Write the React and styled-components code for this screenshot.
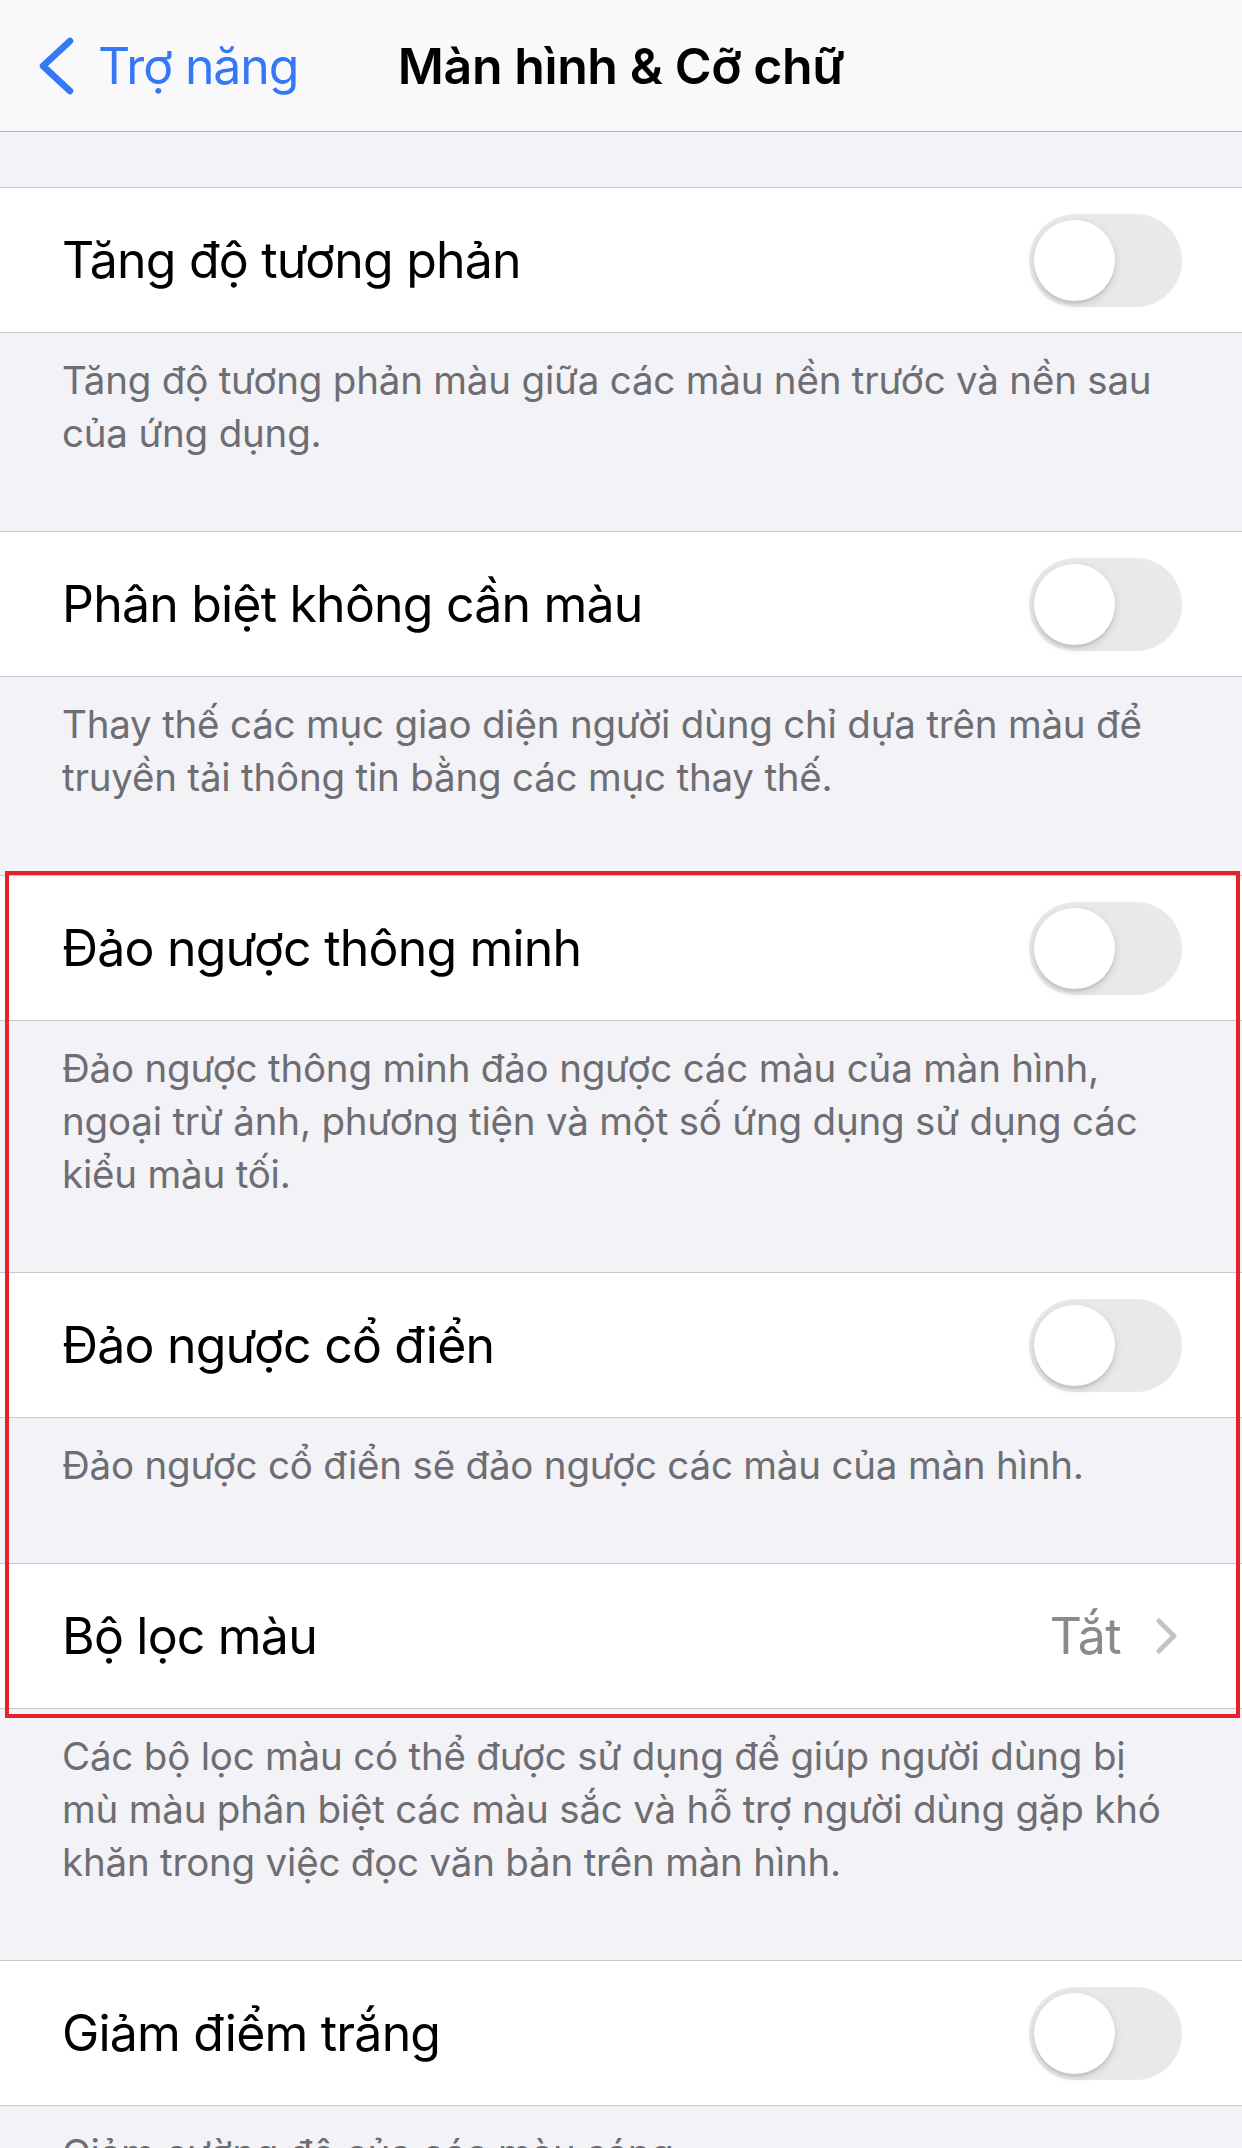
import React from "react";
import styled, { createGlobalStyle } from "styled-components";

const GlobalStyle = createGlobalStyle`
  html, body {
    margin: 0;
    padding: 0;
    background: #f2f2f7;
  }
  body {
    font-family: "Inter", "Noto Sans", "Liberation Sans", sans-serif;
    -webkit-font-smoothing: antialiased;
  }
`;

const Page = styled.div`
  width: 1242px;
  height: 2148px;
  overflow: hidden;
  background: #f2f2f7;
`;

const NavBar = styled.div`
  height: 131px;
  background: #f9f9fb;
  border-bottom: 1px solid #b4b4b8;
  position: relative;
  display: flex;
  align-items: center;
`;

const BackButton = styled.div`
  display: flex;
  align-items: center;
  gap: 23px;
  padding-left: 37px;
  color: #3478f6;
  font-size: 50px;
  letter-spacing: -1.1px;
`;

const NavTitle = styled.div`
  position: absolute;
  left: 0;
  right: 0;
  text-align: center;
  font-size: 50px;
  font-weight: 600;
  color: #000;
  letter-spacing: -0.4px;
  pointer-events: none;
`;

const TopGap = styled.div`
  height: 55px;
`;

const Row = styled.div`
  box-sizing: border-box;
  height: 146px;
  background: #fff;
  border-top: 1px solid #c8c7cc;
  border-bottom: 1px solid #c8c7cc;
  display: flex;
  align-items: center;
  justify-content: space-between;
  padding: 0 60px 0 62px;
`;

const RowLabel = styled.span`
  font-size: 50px;
  color: #000;
  letter-spacing: -0.8px;
`;

const Track = styled.div`
  width: 153px;
  height: 93px;
  border-radius: 47px;
  background: #e9e9eb;
  position: relative;
  flex-shrink: 0;
`;

const Knob = styled.div`
  position: absolute;
  top: 6px;
  left: 5px;
  width: 81px;
  height: 81px;
  border-radius: 50%;
  background: #fff;
  box-shadow: 0 3px 8px rgba(0, 0, 0, 0.15), 0 3px 1px rgba(0, 0, 0, 0.06);
`;

const Detail = styled.div`
  display: flex;
  align-items: center;
  gap: 34px;
  padding-right: 3px;
`;

const DetailValue = styled.span`
  font-size: 50px;
  color: #8a8a8e;
  letter-spacing: -0.6px;
`;

const Footer = styled.div`
  padding: 21px 40px 71px 62px;
  font-size: 38.5px;
  line-height: 53px;
  color: #6d6d72;
  letter-spacing: -0.2px;
  white-space: nowrap;
`;

const Highlight = styled.div`
  position: relative;
  &::after {
    content: "";
    position: absolute;
    top: -4px;
    bottom: -9px;
    left: 5px;
    right: 2px;
    border: 4.5px solid #e8202a;
    pointer-events: none;
  }
`;

function Toggle() {
  return (
    <Track>
      <Knob />
    </Track>
  );
}

function BackChevron() {
  return (
    <svg width="38" height="60" viewBox="0 0 38 60">
      <path
        d="M33 5 L6 30 L33 55"
        fill="none"
        stroke="#3478f6"
        strokeWidth="6.5"
        strokeLinecap="round"
        strokeLinejoin="round"
      />
    </svg>
  );
}

function RightChevron() {
  return (
    <svg width="24" height="38" viewBox="0 0 24 38">
      <path
        d="M4 4 L19 19 L4 34"
        fill="none"
        stroke="#c4c4c7"
        strokeWidth="5"
        strokeLinecap="round"
        strokeLinejoin="round"
      />
    </svg>
  );
}

function Lines({ lines }) {
  return lines.map((l, i) => (
    <React.Fragment key={i}>
      {l}
      {i < lines.length - 1 && <br />}
    </React.Fragment>
  ));
}

export default function App() {
  return (
    <>
      <GlobalStyle />
      <Page>
        <NavBar>
          <BackButton>
            <BackChevron />
            <span>Trợ năng</span>
          </BackButton>
          <NavTitle>Màn hình &amp; Cỡ chữ</NavTitle>
        </NavBar>
        <TopGap />

        <Row>
          <RowLabel>Tăng độ tương phản</RowLabel>
          <Toggle />
        </Row>
        <Footer>
          <Lines
            lines={[
              "Tăng độ tương phản màu giữa các màu nền trước và nền sau",
              "của ứng dụng.",
            ]}
          />
        </Footer>

        <Row>
          <RowLabel>Phân biệt không cần màu</RowLabel>
          <Toggle />
        </Row>
        <Footer>
          <Lines
            lines={[
              "Thay thế các mục giao diện người dùng chỉ dựa trên màu để",
              "truyền tải thông tin bằng các mục thay thế.",
            ]}
          />
        </Footer>

        <Highlight>
          <Row>
            <RowLabel>Đảo ngược thông minh</RowLabel>
            <Toggle />
          </Row>
          <Footer>
            <Lines
              lines={[
                "Đảo ngược thông minh đảo ngược các màu của màn hình,",
                "ngoại trừ ảnh, phương tiện và một số ứng dụng sử dụng các",
                "kiểu màu tối.",
              ]}
            />
          </Footer>

          <Row>
            <RowLabel>Đảo ngược cổ điển</RowLabel>
            <Toggle />
          </Row>
          <Footer>
            <Lines
              lines={["Đảo ngược cổ điển sẽ đảo ngược các màu của màn hình."]}
            />
          </Footer>

          <Row>
            <RowLabel>Bộ lọc màu</RowLabel>
            <Detail>
              <DetailValue>Tắt</DetailValue>
              <RightChevron />
            </Detail>
          </Row>
        </Highlight>
        <Footer>
          <Lines
            lines={[
              "Các bộ lọc màu có thể được sử dụng để giúp người dùng bị",
              "mù màu phân biệt các màu sắc và hỗ trợ người dùng gặp khó",
              "khăn trong việc đọc văn bản trên màn hình.",
            ]}
          />
        </Footer>

        <Row>
          <RowLabel>Giảm điểm trắng</RowLabel>
          <Toggle />
        </Row>
        <Footer>
          <Lines lines={["Giảm cường độ của các màu sáng."]} />
        </Footer>
      </Page>
    </>
  );
}
